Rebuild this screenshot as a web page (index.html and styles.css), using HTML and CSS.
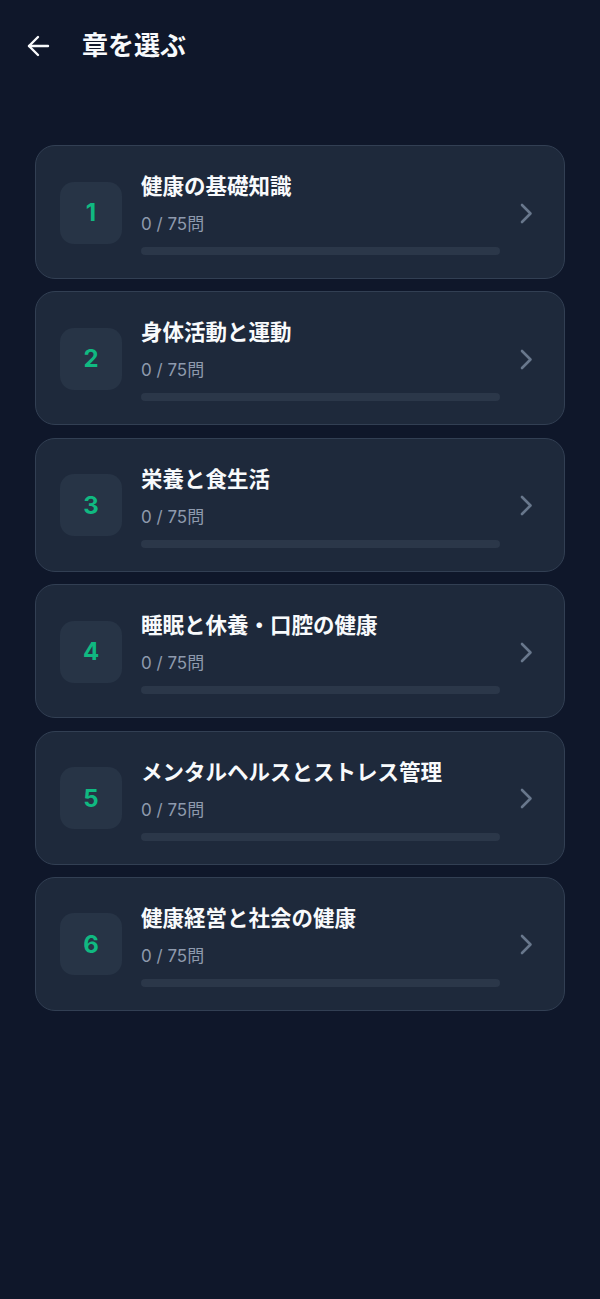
FILE: index.html
```html
<!DOCTYPE html>
<html lang="ja">
<head>
<meta charset="utf-8">
<meta name="viewport" content="width=device-width, initial-scale=1">
<title>章を選ぶ</title>
<link rel="stylesheet" href="styles.css">
</head>
<body>
<div class="app">
  <header class="header">
    <button class="back" aria-label="戻る">
      <svg viewBox="0 0 24 24" width="24" height="24" fill="none" stroke="currentColor" stroke-width="2.4" stroke-linecap="round" stroke-linejoin="round"><path d="M22 12H3"/><path d="M12 3l-9 9 9 9"/></svg>
    </button>
    <h1 class="title">章を選ぶ</h1>
  </header>

  <main class="list">
    <a class="card" href="#">
      <div class="num">1</div>
      <div class="info">
        <div class="name">健康の基礎知識</div>
        <div class="count">0 / 75問</div>
        <div class="track"><div class="fill" style="width:0%"></div></div>
      </div>
      <div class="chev"><svg viewBox="0 0 24 24" width="24" height="24" fill="none" stroke="currentColor" stroke-width="2.6" stroke-linecap="round" stroke-linejoin="round"><path d="M6 4l8.5 8.5L6 21"/></svg></div>
    </a>
    <a class="card" href="#">
      <div class="num">2</div>
      <div class="info">
        <div class="name">身体活動と運動</div>
        <div class="count">0 / 75問</div>
        <div class="track"><div class="fill" style="width:0%"></div></div>
      </div>
      <div class="chev"><svg viewBox="0 0 24 24" width="24" height="24" fill="none" stroke="currentColor" stroke-width="2.6" stroke-linecap="round" stroke-linejoin="round"><path d="M6 4l8.5 8.5L6 21"/></svg></div>
    </a>
    <a class="card" href="#">
      <div class="num">3</div>
      <div class="info">
        <div class="name">栄養と食生活</div>
        <div class="count">0 / 75問</div>
        <div class="track"><div class="fill" style="width:0%"></div></div>
      </div>
      <div class="chev"><svg viewBox="0 0 24 24" width="24" height="24" fill="none" stroke="currentColor" stroke-width="2.6" stroke-linecap="round" stroke-linejoin="round"><path d="M6 4l8.5 8.5L6 21"/></svg></div>
    </a>
    <a class="card" href="#">
      <div class="num">4</div>
      <div class="info">
        <div class="name">睡眠と休養・口腔の健康</div>
        <div class="count">0 / 75問</div>
        <div class="track"><div class="fill" style="width:0%"></div></div>
      </div>
      <div class="chev"><svg viewBox="0 0 24 24" width="24" height="24" fill="none" stroke="currentColor" stroke-width="2.6" stroke-linecap="round" stroke-linejoin="round"><path d="M6 4l8.5 8.5L6 21"/></svg></div>
    </a>
    <a class="card" href="#">
      <div class="num">5</div>
      <div class="info">
        <div class="name">メンタルヘルスとストレス管理</div>
        <div class="count">0 / 75問</div>
        <div class="track"><div class="fill" style="width:0%"></div></div>
      </div>
      <div class="chev"><svg viewBox="0 0 24 24" width="24" height="24" fill="none" stroke="currentColor" stroke-width="2.6" stroke-linecap="round" stroke-linejoin="round"><path d="M6 4l8.5 8.5L6 21"/></svg></div>
    </a>
    <a class="card" href="#">
      <div class="num">6</div>
      <div class="info">
        <div class="name">健康経営と社会の健康</div>
        <div class="count">0 / 75問</div>
        <div class="track"><div class="fill" style="width:0%"></div></div>
      </div>
      <div class="chev"><svg viewBox="0 0 24 24" width="24" height="24" fill="none" stroke="currentColor" stroke-width="2.6" stroke-linecap="round" stroke-linejoin="round"><path d="M6 4l8.5 8.5L6 21"/></svg></div>
    </a>
  </main>
</div>
</body>
</html>
```

FILE: styles.css
```css
* {
  box-sizing: border-box;
}

html, body {
  margin: 0;
  padding: 0;
  background: #0f172a;
}

body {
  font-family: Inter, "Noto Sans CJK JP", sans-serif;
  color: #f1f5f9;
  min-height: 1299px;
}

.app {
  width: 600px;
}

.header {
  height: 92px;
  display: flex;
  align-items: center;
  padding: 0 0 0 26px;
}

.back {
  width: 24px;
  height: 24px;
  padding: 0;
  margin: 0 32px 0 0;
  border: 0;
  background: none;
  color: #f8fafc;
  display: flex;
}

.title {
  margin: 0;
  font-size: 26px;
  font-weight: 700;
  line-height: 32px;
  color: #f8fafc;
}

.list {
  padding: 53px 35px 0;
  display: flex;
  flex-direction: column;
  gap: 12.4px;
}

.card {
  display: flex;
  align-items: center;
  padding: 24px 24px 23px 24px;
  background: #1e293b;
  border: 1px solid #323f53;
  border-radius: 20px;
  text-decoration: none;
  color: inherit;
}

.num {
  width: 62px;
  height: 62px;
  flex: none;
  margin-right: 19px;
  border-radius: 14px;
  background: #273446;
  color: #10b981;
  font-size: 24px;
  font-weight: 700;
  display: flex;
  align-items: center;
  justify-content: center;
}

.info {
  flex: 1;
  min-width: 0;
}

.name {
  font-size: 21.5px;
  font-weight: 700;
  line-height: 32px;
  color: #f8fafc;
  white-space: nowrap;
}

.count {
  margin-top: 10px;
  font-size: 17px;
  line-height: 24px;
  color: #8e9aad;
}

.track {
  margin-top: 11px;
  height: 8px;
  border-radius: 4px;
  background: #2b3749;
  overflow: hidden;
}

.fill {
  height: 100%;
  background: #10b981;
}

.chev {
  flex: none;
  width: 24px;
  height: 24px;
  margin-left: 16px;
  color: #68778c;
  display: flex;
}
```
